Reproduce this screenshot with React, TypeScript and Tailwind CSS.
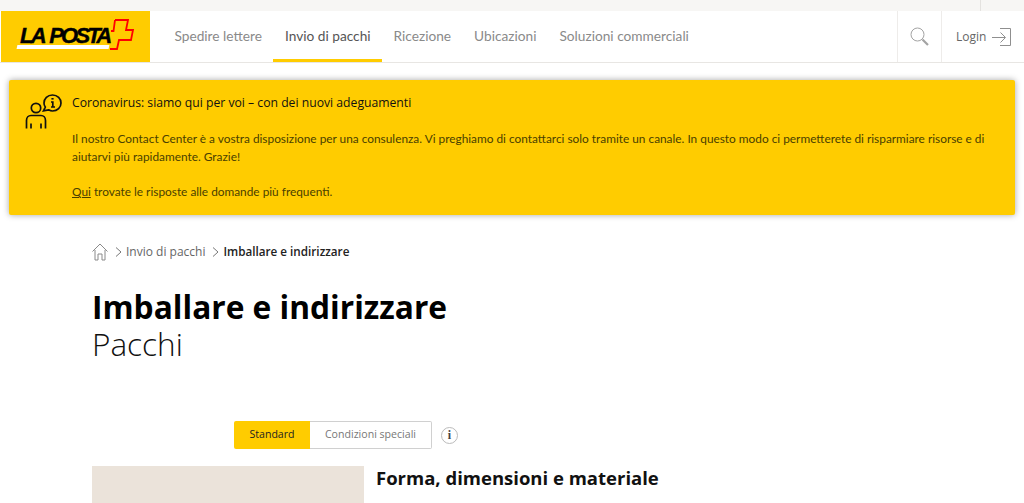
const NAV = ["Spedire lettere", "Invio di pacchi", "Ricezione", "Ubicazioni", "Soluzioni commerciali"];

function Logo() {
  return (
    <div className="relative flex h-[51px] w-[149px] shrink-0 bg-[#ffcc00]">
      <div className="absolute left-[16px] top-[34px] h-[4px] w-[92px] -skew-x-12 bg-white" />
      <span className="absolute left-[19px] top-[11px] font-['Liberation_Sans',sans-serif] text-[22px] leading-[28px] font-bold tracking-[-2.800px] [word-spacing:3px] text-black italic [-webkit-text-stroke:0.4px_black]">
        LA POSTA
      </span>
      <svg className="absolute left-[108px] top-[8px]" width="26" height="32" viewBox="0 0 26 32" fill="none">
        <path d="M6 1H19L17 11H24L22 21H10L8 30H1M6 1L4.500 12H2" stroke="#ff0000" strokeWidth="1.800" />
      </svg>
    </div>
  );
}

function Header() {
  return (
    <header className="flex h-[52px] border-b border-[#e8e6e3] bg-white">
      <div className="ml-[1px]">
        <Logo />
      </div>
      <nav className="ml-[13px] flex">
        {NAV.map((item) => (
          <a
            key={item}
            className={`flex h-[51px] items-center border-b-[3px] px-[11.500px] pt-[3px] font-['Lato',sans-serif] text-[13.700px] ${
              item === "Invio di pacchi" ? "border-[#ffcc00] text-[#555]" : "border-transparent text-[#8a8a8a]"
            }`}
          >
            {item}
          </a>
        ))}
      </nav>
      <div className="ml-auto flex">
        <button className="flex w-[45px] items-center justify-center border-x border-[#eeecea]">
          <svg width="20" height="20" viewBox="0 0 20 20" fill="none" stroke="#a3a3a3">
            <circle cx="7.500" cy="7.500" r="6.500" />
            <path d="M12.500 12.500L18 18" strokeWidth="2.200" />
          </svg>
        </button>
        <button className="flex w-[82px] items-center gap-[6px] pl-[14px] text-[12px] text-[#666]">
          Login
          <svg width="20" height="18" viewBox="0 0 20 18" fill="none" stroke="#8f8f8f">
            <path d="M0 9.500H13M8.500 4.500L13.500 9.500L8.500 14.500M8 .5H18.500V17.500H8" />
          </svg>
        </button>
      </div>
    </header>
  );
}

function Notice() {
  return (
    <section className="mx-[9px] mt-[17px] flex h-[135px] rounded-[2px] bg-[#ffcc00] pl-[16px] pt-[14px] pr-[20px] shadow-[0_0_6px_rgba(0,0,0,0.35)]">
      <svg className="shrink-0" width="38" height="36" viewBox="0 0 38 36" fill="none" stroke="#111" strokeWidth="1.700">
        <circle cx="11" cy="14" r="4.700" />
        <path d="M1.500 34.500V26.500C1.500 23.500 3.500 21.500 6 21.500H16C18.500 21.500 20.500 23.500 20.500 26.500V34.500M6 29.500V34.500M16 29.500V34.500" />
        <path d="M27.500 1C22.500 1 19 4.500 19 9C19 10.500 19.500 12 20.300 13L18.500 16.800L23.500 15.800C24.700 16.500 26 17 27.500 17C32.500 17 36 13.500 36 9C36 4.500 32.500 1 27.500 1Z" />
        <path d="M26 8H27.800V13M26 13H30" />
        <path d="M27.500 4V5.600" strokeWidth="2.200" />
      </svg>
      <div className="ml-[9px] flex-1 font-['Lato',sans-serif] text-[11.850px] leading-[18px] text-[#4a4000]">
        <p className="font-['Open_Sans',sans-serif] text-[12.200px] font-medium text-[#111]">Coronavirus: siamo qui per voi – con dei nuovi adeguamenti</p>
        <p className="mt-[18px]">
          Il nostro Contact Center è a vostra disposizione per una consulenza. Vi preghiamo di contattarci solo tramite un canale. In questo modo ci permetterete di risparmiare risorse e di aiutarvi più rapidamente. Grazie!
        </p>
        <p className="mt-[17px]">
          <a className="underline">Qui</a> trovate le risposte alle domande più frequenti.
        </p>
      </div>
    </section>
  );
}

function Breadcrumb() {
  const Chevron = () => (
    <svg width="7" height="10" viewBox="0 0 7 10" fill="none" stroke="#777">
      <path d="M1 .5L6 5L1 9.500" />
    </svg>
  );
  return (
    <div className="flex h-[20px] items-center text-[12px]">
      <svg width="16" height="18" viewBox="0 0 16 18" fill="none" stroke="#8a8a8a">
        <path d="M.5 8.500L8 1L15.500 8.500M3 7V17H6V11H10V17H13V7" />
      </svg>
      <span className="ml-[7px]"><Chevron /></span>
      <span className="ml-[4px] text-[#666]">Invio di pacchi</span>
      <span className="ml-[7px]"><Chevron /></span>
      <span className="ml-[4px] text-[11.700px] font-semibold text-[#222]">Imballare e indirizzare</span>
    </div>
  );
}

function Tabs() {
  return (
    <div className="ml-[142px] mt-[58px] flex items-center">
      <div className="flex h-[28px] text-[10.600px]">
        <span className="flex w-[76px] items-center justify-center rounded-l-[2px] bg-[#ffcc00] text-[#222]">Standard</span>
        <span className="flex w-[122px] items-center justify-center rounded-r-[2px] border border-l-0 border-[#d0d0d0] bg-white text-[#777]">Condizioni speciali</span>
      </div>
      <span className="ml-[9px] flex h-[17px] w-[17px] items-center justify-center rounded-full border border-[#bbb] font-['Liberation_Serif',serif] text-[12px] font-bold text-[#444]">
        i
      </span>
    </div>
  );
}

export default function App() {
  return (
    <div className="h-[503px] overflow-hidden bg-white font-['Open_Sans','Noto_Sans',sans-serif]">
      <div className="flex h-[11px] justify-end bg-[#f7f6f4] pr-[43px]">
        <div className="w-px bg-[#e4e2df]" />
      </div>
      <Header />
      <Notice />
      <main className="pl-[92px] pt-[27px]">
        <Breadcrumb />
        <h1 className="mt-[26px] text-[31.700px] leading-[38px] font-bold text-black">Imballare e indirizzare</h1>
        <p className="-mt-px text-[31.500px] leading-[38px] font-light text-[#111]">Pacchi</p>
        <Tabs />
        <div className="mt-[17px] flex">
          <div className="h-[60px] w-[272px] shrink-0 bg-[#ebe3da]" />
          <h2 className="ml-[12px] mt-[-1px] text-[18.500px] leading-[26px] font-bold text-[#111]">Forma, dimensioni e materiale</h2>
        </div>
      </main>
    </div>
  );
}
